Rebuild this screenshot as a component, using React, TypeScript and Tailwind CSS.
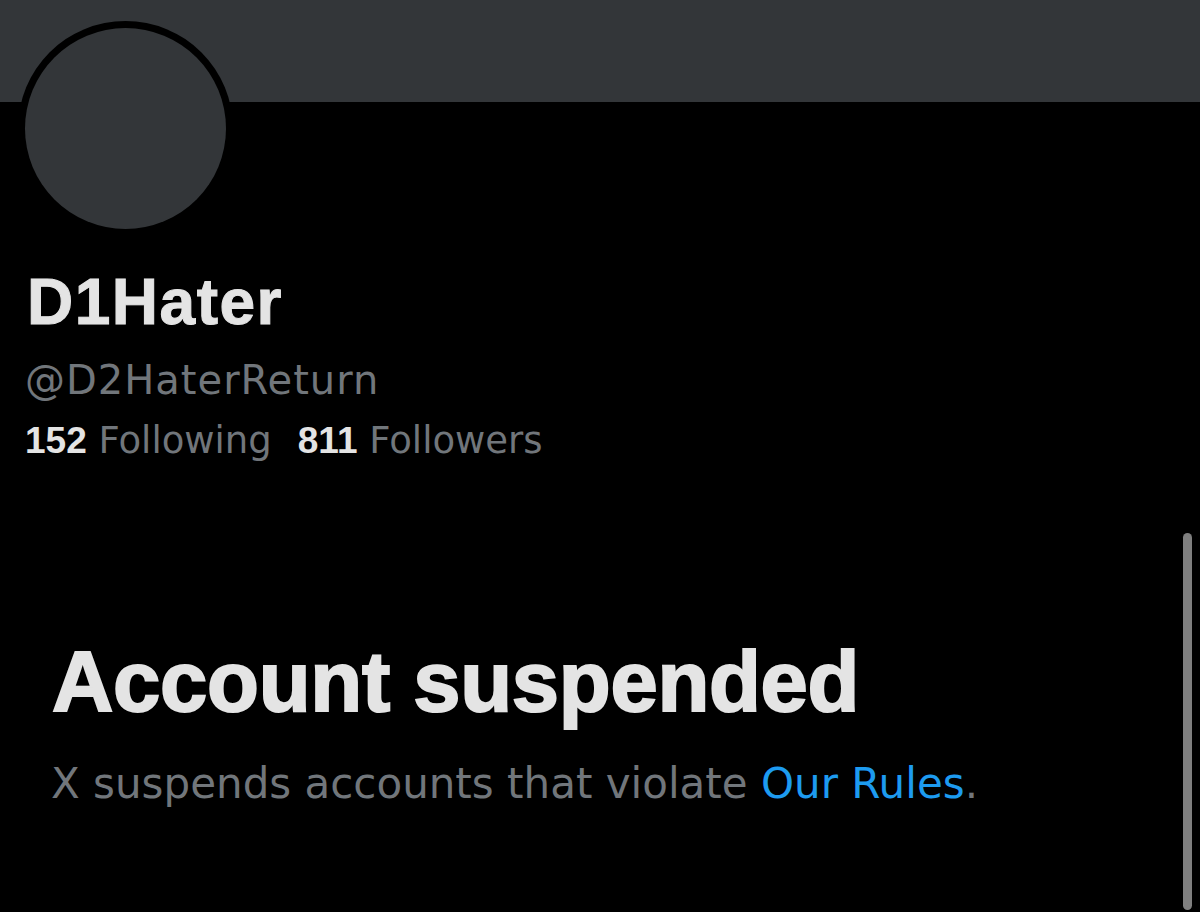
const regular = "font-['DejaVu_Sans',sans-serif]";
const heavy = "font-['Liberation_Sans',Arial,sans-serif] font-bold";

function Stat({ count, label }: { count: string; label: string }) {
  return (
    <span className="whitespace-nowrap">
      <span className={`${heavy} text-[#e4e4e4]`}>{count}</span>
      <span className={`${regular} text-[#71767b]`}> {label}</span>
    </span>
  );
}

export default function App() {
  return (
    <div className="relative h-[912px] w-[1200px] overflow-hidden bg-black">
      {/* banner */}
      <div className="h-[102px] bg-[#333639]" />

      {/* avatar overlaps the banner */}
      <div className="-mt-[81px] ml-[18px] h-[215px] w-[215px] rounded-full bg-black p-[7px]">
        <div className="h-full w-full rounded-full bg-[#333639]" />
      </div>

      <div className="pl-[24px]">
        <h1 className={`${heavy} mt-[34px] pl-[3px] text-[64px] leading-none tracking-[1.5px] text-[#e4e4e4] [-webkit-text-stroke:1px_#e4e4e4]`}>
          D1Hater
        </h1>
        <p className={`${regular} mt-[26px] pl-[1px] text-[40px] leading-none tracking-[1px] text-[#71767b]`}>
          @D2HaterReturn
        </p>
        <div className="mt-[20px] flex gap-[26px] pl-[1px] text-[37px] leading-none">
          <Stat count="152" label="Following" />
          <Stat count="811" label="Followers" />
        </div>
      </div>

      <section className="pl-[51px]">
        <h2 className={`${heavy} mt-[180px] pl-[1px] text-[85px] leading-none tracking-[-0.3px] text-[#e4e4e4] [-webkit-text-stroke:2px_#e4e4e4]`}>
          Account suspended
        </h2>
        <p className={`${regular} mt-[39px] text-[42px] leading-none text-[#71767b]`}>
          X suspends accounts that violate <span className="text-[#1d9bf0]">Our Rules</span>.
        </p>
      </section>

      {/* scroll indicator */}
      <div className="absolute left-[1183px] top-[533px] h-[377px] w-[9px] rounded-full bg-[#7f7f7f]" />
    </div>
  );
}
